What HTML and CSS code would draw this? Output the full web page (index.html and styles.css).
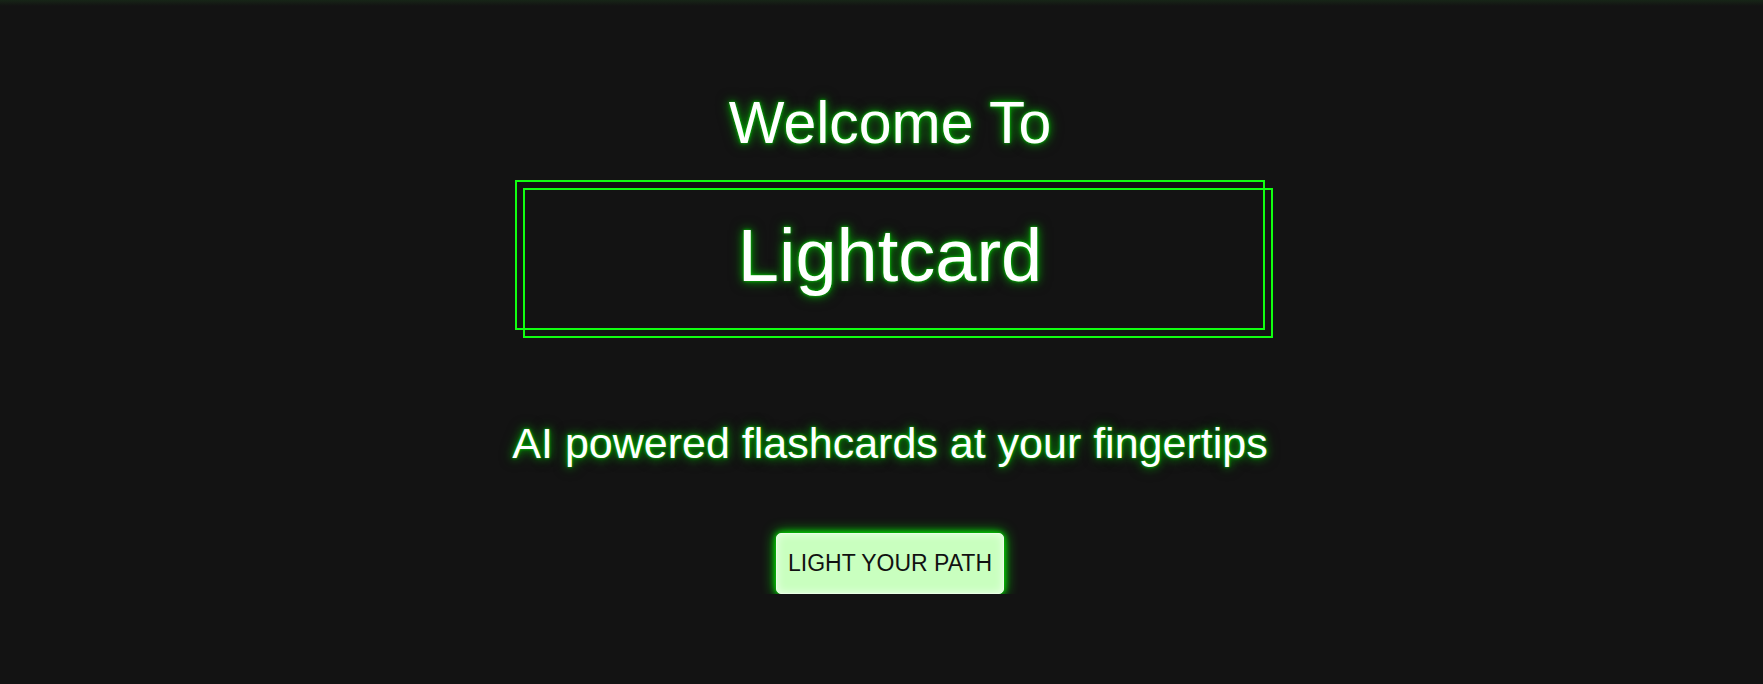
FILE: index.html
```html
<!DOCTYPE html>
<html lang="en">
<head>
<meta charset="utf-8">
<title>Lightcard</title>
<link rel="stylesheet" href="styles.css">
</head>
<body>
<div class="topglow"></div>
<main class="hero">
  <h2 class="welcome">Welcome To</h2>
  <div class="logo-box">
    <h1 class="logo">Lightcard</h1>
  </div>
  <p class="tagline">AI powered flashcards at your fingertips</p>
  <button class="cta">LIGHT YOUR PATH</button>
</main>
</body>
</html>
```
FILE: styles.css
```css
html, body {
  margin: 0;
  padding: 0;
  background: #131313;
  font-family: "Liberation Sans", Arial, sans-serif;
  overflow: hidden;
}

.topglow {
  height: 6px;
  background: linear-gradient(to bottom, rgba(40, 120, 40, 0.18), rgba(19, 19, 19, 0));
  margin-bottom: -6px;
}

.hero {
  display: flex;
  flex-direction: column;
  align-items: center;
  padding-top: 91px;
  padding-left: 17px;
}

.welcome,
.logo,
.tagline {
  color: #ffffff;
  text-shadow: 0 0 3px rgba(0, 230, 0, 0.9), 0 0 8px rgba(0, 190, 0, 0.8), 0 0 14px rgba(0, 140, 0, 0.6);
}

.welcome {
  margin: 0;
  font-size: 59px;
  line-height: 64px;
  font-weight: 400;
}

.logo-box {
  position: relative;
  box-sizing: border-box;
  width: 750px;
  height: 150px;
  margin-top: 25px;
  border: 2px solid #11ff11;
  display: flex;
  align-items: center;
  justify-content: center;
  padding-top: 1px;
}

.logo-box::after {
  content: "";
  position: absolute;
  left: 6px;
  top: 6px;
  width: 750px;
  height: 150px;
  box-sizing: border-box;
  border: 2px solid #11ff11;
  pointer-events: none;
}

.logo {
  margin: 0;
  font-size: 74px;
  font-weight: 400;
}

.tagline {
  margin: 89px 0 0;
  font-size: 43px;
}

.cta {
  margin-top: 65px;
  font-family: "Liberation Sans", Arial, sans-serif;
  font-size: 23px;
  line-height: 25px;
  color: #111;
  background: #c9ffbf;
  border: 1px solid #e8ffe4;
  border-radius: 5px;
  padding: 17px 11px;
  box-shadow: 0 0 14px #00e000, 0 0 6px #00ff00, inset 0 0 8px rgba(255, 255, 255, 0.7);
  cursor: pointer;
}
```
